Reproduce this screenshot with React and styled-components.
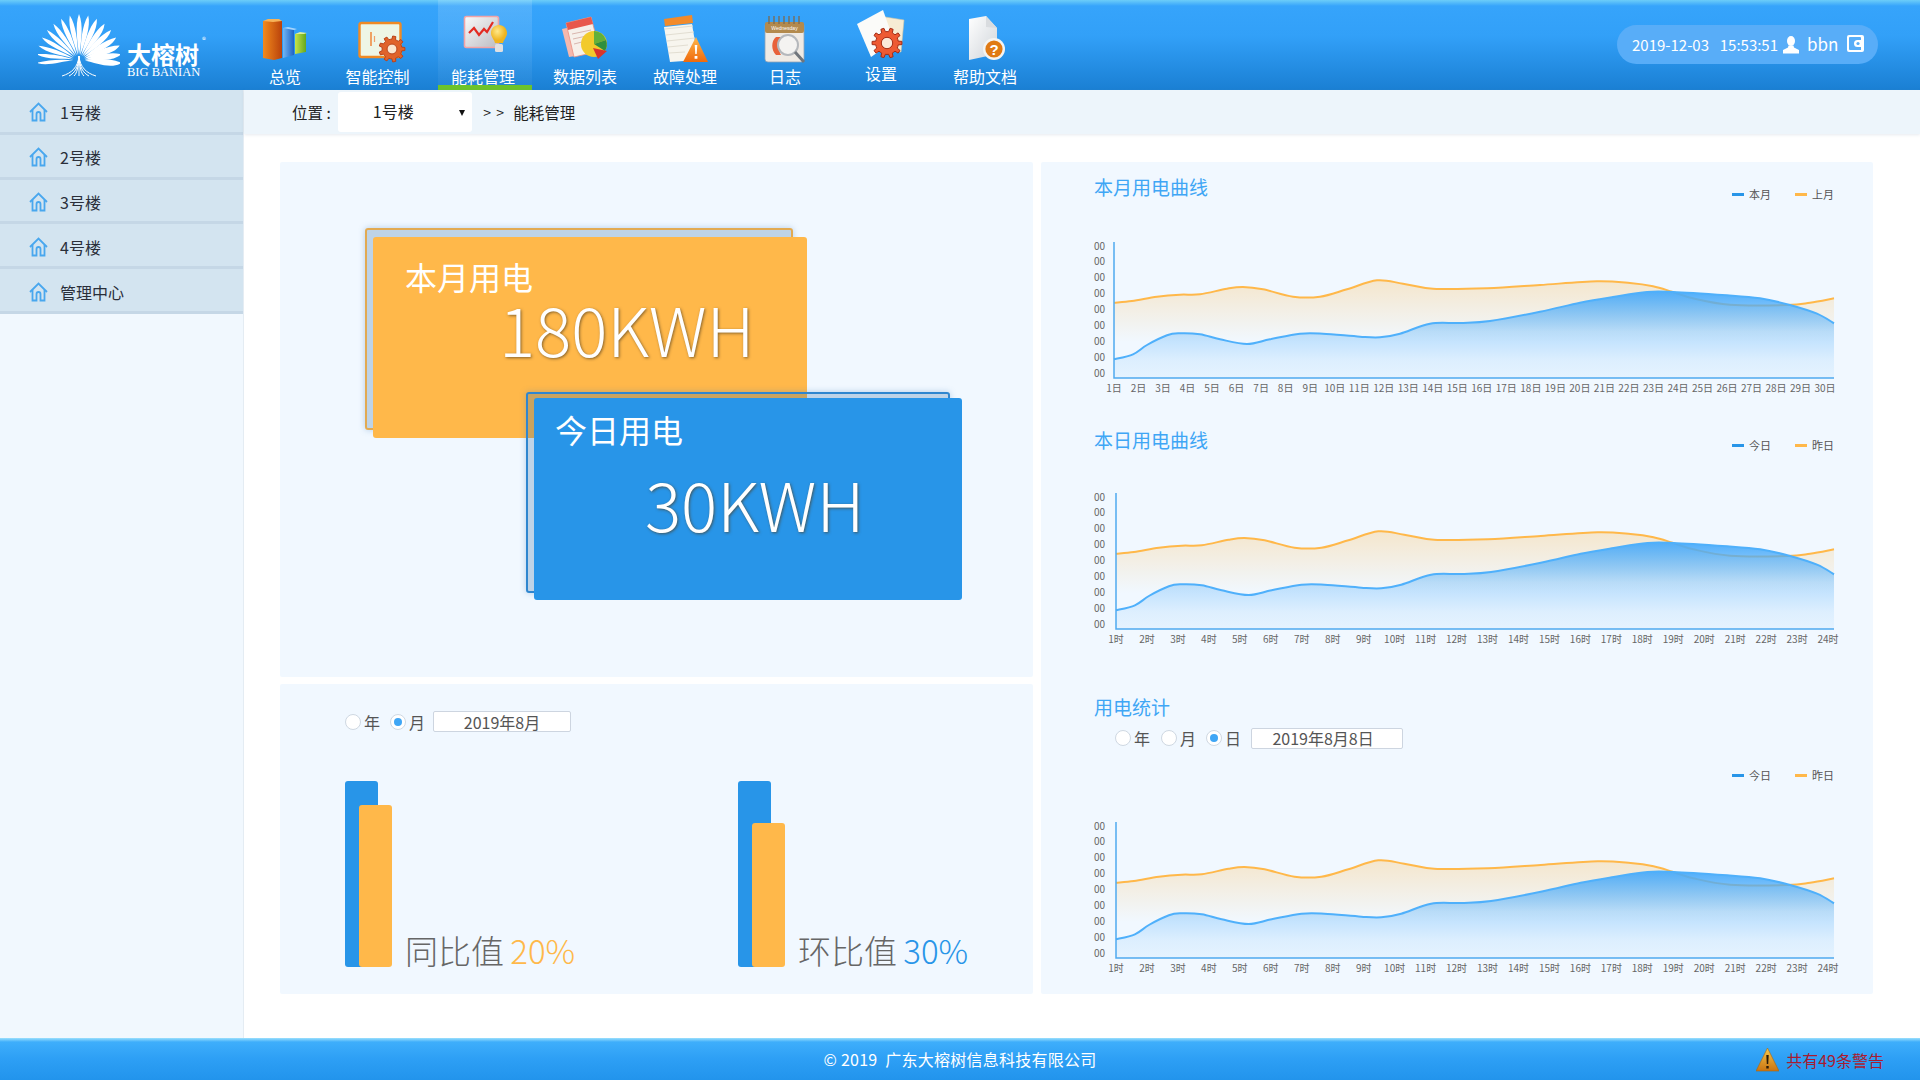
import styled, { createGlobalStyle } from 'styled-components'

const CJK = `"Noto Sans CJK SC", "Noto Sans", sans-serif`
const BLUE = '#2895e8'
const ORANGE = '#ffb84a'

const GlobalStyle = createGlobalStyle`
  html, body {
    margin: 0;
    padding: 0;
    background: #fff;
    font-family: ${CJK};
    overflow: hidden;
  }
  * { box-sizing: border-box; }
`

const Page = styled.div`
  width: 1920px;
  height: 1080px;
  display: flex;
  flex-direction: column;
`

/* header */
const Header = styled.header`
  height: 90px;
  flex: none;
  display: flex;
  background: linear-gradient(#6ccdf8 0, #36a4fb 6px, #32a0f8 40%, #1a7fd3 100%);
`
const LogoBox = styled.div`
  width: 253px;
  flex: none;
  display: flex;
  align-items: flex-start;
`
const LogoText = styled.div`
  margin: 41px 0 0 7px;
  color: #fff;
  width: 76px;
  position: relative;
`
const LogoName = styled.div`
  font-size: 24px;
  font-weight: 700;
  line-height: 26px;
  white-space: nowrap;
`
const LogoSub = styled.div`
  font-family: "Liberation Serif", serif;
  font-size: 12.5px;
  line-height: 10px;
  white-space: nowrap;
`
const LogoMark = styled.span`
  position: absolute;
  left: 75px;
  top: -6px;
  font-size: 8px;
  line-height: 10px;
`
const Nav = styled.nav`
  display: flex;
`
const NavItem = styled.div`
  width: ${p => p.$w}px;
  height: 90px;
  padding-top: 7px;
  padding-right: ${p => (p.$active ? '4px' : '0')};
  display: flex;
  flex-direction: column;
  align-items: center;
  color: #fff;
  border-bottom: ${p => (p.$active ? '5px solid #6cc32b' : 'none')};
  background: ${p => (p.$active ? 'linear-gradient(rgba(255,255,255,.14), rgba(255,255,255,.04))' : 'none')};
  svg { display: block; flex: none; }
`
const NavLabel = styled.span`
  font-size: 16px;
  line-height: 20px;
  margin-top: ${p => (p.$lift ? '-4px' : '-1px')};
  white-space: nowrap;
`
const UserPill = styled.div`
  margin: 25px 42px 0 auto;
  width: 261px;
  height: 39px;
  border-radius: 20px;
  background: #58adf8;
  color: #fff;
  display: flex;
  align-items: center;
  padding-left: 15px;
  font-size: 15px;
  white-space: pre;
`
const Clock = styled.span`
  word-spacing: 2px;
  margin-right: 5px;
`
const UserName = styled.span`
  font-size: 17px;
  line-height: 20px;
  margin: -2px 9px 0 8px;
`
const ExitWrap = styled.span`
  display: flex;
  margin-top: -3px;
`

/* body */
const Body = styled.div`
  flex: 1;
  display: flex;
  min-height: 0;
`
const Sidebar = styled.aside`
  width: 244px;
  flex: none;
  background: #f1f8fe;
  border-right: 1px solid #e4ecf3;
`
const SideItem = styled.div`
  height: 44.8px;
  display: flex;
  align-items: center;
  padding: 3px 0 0 29px;
  gap: 12px;
  background: #d3e4f0;
  border-bottom: 3px solid #c5d7e6;
  color: #2a2f3a;
  font-size: 16px;
`
const Main = styled.main`
  flex: 1;
  min-width: 0;
  display: flex;
  flex-direction: column;
`
const Crumbs = styled.div`
  height: 44px;
  flex: none;
  display: flex;
  align-items: center;
  background: #edf5fb;
  box-shadow: 0 1px 3px rgba(120, 140, 160, .18);
  color: #222;
  font-size: 15.5px;
  padding-left: 48px;
  white-space: pre;
`
const SelectBox = styled.div`
  width: 134px;
  height: 40px;
  margin: 0 11px 0 7.5px;
  background: #fff;
  border-radius: 3px;
  position: relative;
  display: flex;
  align-items: center;
  justify-content: center;
  padding: 0 24px 2px 0;
  font-size: 16px;
  &::after {
    content: '';
    position: absolute;
    right: 7px;
    top: 18px;
    border: 3.5px solid transparent;
    border-top: 6px solid #111;
    border-bottom: 0;
  }
`
const Arrows = styled.span`
  width: 30px;
  font-size: 14px;
  letter-spacing: 1px;
`
const Content = styled.div`
  flex: 1;
  display: grid;
  grid-template-columns: 753px 832px;
  grid-template-rows: 515px 310px;
  gap: 7px 8px;
  padding: 28px 0 0 36px;
`
const Panel = styled.section`
  background: #f1f8ff;
  border-radius: 2px;
  grid-row: ${p => p.$rows || 'auto'};
  grid-column: ${p => p.$col || 'auto'};
  padding: ${p => p.$pad || '0'};
  isolation: isolate;
`

/* usage cards */
const CardWrap = styled.div`
  position: relative;
  width: ${p => p.$w}px;
  height: ${p => p.$h}px;
  margin: ${p => p.$m};
`
const CardFrame = styled.div`
  position: absolute;
  left: -8px;
  top: ${p => p.$top}px;
  right: ${p => p.$right}px;
  bottom: ${p => p.$bottom}px;
  border: 2px solid ${p => p.$c};
  border-radius: 3px;
  background: rgba(40, 100, 160, .25);
  box-shadow: 0 0 6px rgba(70, 130, 190, .35);
`
const CardFace = styled.div`
  position: absolute;
  inset: 0;
  background: ${p => p.$c};
  border-radius: 3px;
  color: #fff;
`
const CardTitle = styled.div`
  position: absolute;
  left: ${p => p.$x}px;
  top: ${p => p.$y}px;
  font-size: 32px;
  line-height: 32px;
`
const CardValue = styled.div`
  position: absolute;
  left: ${p => p.$x}px;
  top: ${p => p.$y}px;
  font-size: 67.5px;
  font-weight: 300;
  line-height: 70px;
  white-space: nowrap;
  text-shadow: 1px 1px 3px rgba(80, 60, 30, .7);
`

/* radio row */
const FilterRow = styled.div`
  display: flex;
  align-items: center;
  height: ${p => p.$h}px;
  margin: ${p => p.$m || '0'};
  color: #555;
  font-size: 16px;
`
const RadioLabel = styled.span`
  display: flex;
  align-items: center;
  gap: 3px;
  margin-right: ${p => p.$gap}px;
`
const RadioDot = styled.span`
  width: 16px;
  height: 16px;
  border-radius: 50%;
  background: #fff;
  border: 1px solid #cfd8e2;
  display: flex;
  align-items: center;
  justify-content: center;
  &::after {
    content: '';
    width: 8px;
    height: 8px;
    border-radius: 50%;
    background: ${p => (p.$on ? '#3fa6f5' : 'transparent')};
  }
`
const DateInput = styled.div`
  width: ${p => p.$w}px;
  height: 21px;
  background: #fff;
  border: 1px solid #cdd5e0;
  border-radius: 2px;
  display: flex;
  align-items: center;
  justify-content: center;
  font-size: 16px;
  color: #555;
  padding-right: ${p => p.$shift || 0}px;
`

/* ratio bars */
const BarRow = styled.div`
  display: flex;
  margin-top: 49px;
`
const BarGroup = styled.div`
  width: ${p => p.$w}px;
  flex: none;
  height: 186px;
  display: flex;
  align-items: flex-end;
`
const Bar = styled.div`
  width: 33px;
  height: ${p => p.$h}px;
  background: ${p => p.$c};
  border-radius: 3px;
  margin-left: ${p => p.$ml || 0}px;
`
const BarText = styled.div`
  margin-left: 13px;
  font-size: 33px;
  line-height: 36px;
  word-spacing: -1px;
  color: #666;
  white-space: nowrap;
  font-weight: 300;
  margin-bottom: -1px;
`
const BarValue = styled.span`
  color: ${p => p.$c};
`

/* charts */
const ChartSection = styled.div`
  padding: ${p => p.$top}px 39px 0 53px;
`
const SectionHead = styled.div`
  display: flex;
  justify-content: space-between;
  align-items: flex-start;
`
const SectionTitle = styled.h3`
  margin: 0;
  font-weight: 400;
  font-size: 19px;
  line-height: 26px;
  color: #3fa6f5;
`
const Legend = styled.div`
  display: flex;
  gap: 24px;
  height: 14px;
  margin-top: ${p => p.$top || 0}px;
  justify-content: flex-end;
  font-size: 11px;
  line-height: 14px;
  color: #555;
`
const LegendItem = styled.span`
  display: flex;
  align-items: center;
  gap: 5px;
  &::before {
    content: '';
    width: 12px;
    height: 3px;
    background: ${p => p.$c};
  }
`
const ChartSvg = styled.svg`
  display: block;
  margin: ${p => p.$top}px 0 0 -10px;
  text { font-family: ${CJK}; fill: #666; }
`

/* footer */
const Footer = styled.footer`
  height: 42px;
  flex: none;
  position: relative;
  display: flex;
  align-items: center;
  justify-content: center;
  color: #fff;
  font-size: 16px;
  letter-spacing: .25px;
  white-space: pre;
  background: linear-gradient(#9be0fd 0, #3eaefb 4px, #2d9ff5 50%, #2294ec 100%);
`
const Warning = styled.div`
  position: absolute;
  right: 36px;
  top: 10px;
  display: flex;
  align-items: center;
  gap: 7px;
  color: #a81b30;
  letter-spacing: 0;
  line-height: 24px;
`

/* drawing helpers */
const gearPath = (cx, cy, r, teeth) => {
  const step = (Math.PI * 2) / teeth
  const inner = r * 0.76
  let d = ''
  for (let i = 0; i < teeth; i++) {
    const a = i * step
    const pts = [
      [inner, a - step * 0.5],
      [inner, a - step * 0.27],
      [r, a - step * 0.17],
      [r, a + step * 0.17],
      [inner, a + step * 0.27],
    ]
    pts.forEach(([rad, ang], k) => {
      d += `${i === 0 && k === 0 ? 'M' : 'L'}${(cx + rad * Math.cos(ang)).toFixed(1)} ${(cy + rad * Math.sin(ang)).toFixed(1)}`
    })
  }
  return d + 'Z'
}

function Gear({ cx, cy, r, teeth = 9, fill, stroke, hole = '#fff' }) {
  return (
    <g>
      <path d={gearPath(cx, cy, r, teeth)} fill={fill} stroke={stroke} strokeWidth="1" />
      <circle cx={cx} cy={cy} r={r * 0.38} fill={hole} stroke={stroke} strokeWidth="1" />
    </g>
  )
}

function TreeLogo() {
  const count = 17
  const feathers = Array.from({ length: count }, (_, i) => {
    const t = i / (count - 1)
    const ang = -86 + t * 172
    const len = 47 - Math.abs(t - 0.5) * 10
    const bend = (t - 0.5) * 12
    return (
      <path
        key={i}
        transform={`translate(41 47) rotate(${ang})`}
        d={`M0 -6 C${2.4 + bend * 0.2} -${len * 0.4} ${4.6 + bend} -${len * 0.78} ${bend * 0.8} -${len} C${-4.4 + bend * 0.6} -${len * 0.76} -1.4 -${len * 0.4} 0 -6Z`}
        fill="#fff"
      />
    )
  })
  return (
    <svg width="82" height="64" viewBox="0 0 82 64" style={{ marginLeft: 38, marginTop: 14 }}>
      {feathers}
      <path
        d="M41 42 C40 53 34 59 24 62 M41 42 C40.5 53 37 59 31 62 M41 42 V62 M41 42 C41.5 53 45 59 51 62 M41 42 C42 53 48 59 58 62 M41 42 C40.5 53 39 59 36 62 M41 42 C41.5 53 43 59 46 62"
        fill="none"
        stroke="#fff"
        strokeWidth="1"
      />
    </svg>
  )
}

function BarsIcon() {
  return (
    <svg width="60" height="60" viewBox="0 0 60 60">
      <defs>
        <linearGradient id="bA" x1="0" x2="1"><stop offset="0" stopColor="#f28a1c" /><stop offset="1" stopColor="#b9420c" /></linearGradient>
        <linearGradient id="bB" x1="0" x2="1"><stop offset="0" stopColor="#6fb6f5" /><stop offset="1" stopColor="#1f63c4" /></linearGradient>
        <linearGradient id="bC" x1="0" x2="1"><stop offset="0" stopColor="#c7e34a" /><stop offset="1" stopColor="#64a81d" /></linearGradient>
      </defs>
      <path d="M28 21l11 2v25l-11 3z" fill="url(#bB)" />
      <path d="M28 21l5-1 9 2-3 1z" fill="#a7d4fb" />
      <path d="M40 27l11-1v19l-11 2z" fill="url(#bC)" />
      <path d="M40 27l5-2 7 1-3 1z" fill="#ddef9c" />
      <path d="M8 14l12 0 7 0v37l-8 2-11-2z" fill="url(#bA)" />
      <path d="M8 14l5-2 11 0 3 2-9 1z" fill="#f6b35a" />
    </svg>
  )
}

function ControlIcon() {
  return (
    <svg width="60" height="60" viewBox="0 0 60 60">
      <rect x="11.5" y="16" width="41" height="34" rx="2" fill="#eef6e6" stroke="#f08a24" strokeWidth="2.4" />
      <path d="M23 25v14" stroke="#ef7f2b" strokeWidth="1.4" />
      <path d="M26.5 29v6" stroke="#ef9f6b" strokeWidth="1.2" />
      <Gear cx={44} cy={42} r={13} fill="#e0632a" stroke="#b9431a" hole="#fbe7cf" />
    </svg>
  )
}

function EnergyIcon() {
  return (
    <svg width="60" height="60" viewBox="0 0 60 60">
      <defs>
        <linearGradient id="eA" x1="0" y1="0" x2="1" y2="1"><stop offset="0" stopColor="#fafafa" /><stop offset="1" stopColor="#bcbcc2" /></linearGradient>
        <radialGradient id="eB" cx=".4" cy=".35"><stop offset="0" stopColor="#ffe98a" /><stop offset="1" stopColor="#f0b41e" /></radialGradient>
      </defs>
      <rect x="11.5" y="9.5" width="34" height="31" rx="2" fill="url(#eA)" stroke="#f2a3a6" strokeWidth="1.6" />
      <path d="M16 26l5-5 5 7 5-6 3 3 6-10" fill="none" stroke="#e32b22" strokeWidth="2.2" />
      <path d="M46 18c5 0 8 4 8 8 0 4-3 6-4 10h-8c-1-4-4-6-4-10 0-4 3-8 8-8z" fill="url(#eB)" />
      <rect x="42" y="37" width="8" height="8" rx="1.5" fill="#dfe0e2" />
    </svg>
  )
}

function DataIcon() {
  return (
    <svg width="60" height="60" viewBox="0 0 60 60">
      <path d="M7 22l27-6 6 30-26 4z" fill="#f4b8ad" />
      <path d="M11 16l25-6 9 34-26 6z" fill="#f6f0ea" stroke="#ea8f80" strokeWidth=".8" />
      <path d="M11 16l25-6 2 7-25 6z" fill="#e8584c" />
      <path d="M17 27l19-4M18 32l18-4M19 37l12-3" stroke="#d9b6ae" strokeWidth="1" />
      <circle cx="39" cy="37" r="13" fill="#f2ca2b" />
      <path d="M39 37V24a13 13 0 0 1 12 9z" fill="#62b03a" />
      <path d="M39 37l12-4a13 13 0 0 1 -1 11z" fill="#2e8f3f" />
      <path d="M38 41l14 3-9 8z" fill="#d8352b" />
    </svg>
  )
}

function FaultIcon() {
  return (
    <svg width="60" height="60" viewBox="0 0 60 60">
      <defs>
        <linearGradient id="fA" x1="0" y1="0" x2="0" y2="1"><stop offset="0" stopColor="#ffb64a" /><stop offset="1" stopColor="#ef6a0d" /></linearGradient>
      </defs>
      <path d="M9 20l28-3 6 36-28 2z" fill="#f7f5ee" />
      <path d="M9 20l28-4 1 8-28 3z" fill="#f28a2a" transform="translate(0 -8)" />
      <path d="M10 22l28-3M11 28l28-3M12 34l28-3M13 40l20-2M14 46l16-1" stroke="#e2ded2" strokeWidth="1" />
      <path d="M41 30l12 25H28z" fill="url(#fA)" />
      <path d="M39.7 38h2.6l-.6 9h-1.4zM39.6 49h2.8v2.8h-2.8z" fill="#fff" />
    </svg>
  )
}

function LogIcon() {
  const rings = [14, 19, 24, 29, 34, 39, 44]
  return (
    <svg width="60" height="60" viewBox="0 0 60 60">
      <rect x="10" y="16" width="39" height="39" rx="3" fill="#efeae4" stroke="#8fa2b5" strokeWidth=".8" />
      <rect x="10" y="15" width="39" height="11" rx="2" fill="#b38a4d" />
      <text x="29.5" y="23" textAnchor="middle" fontSize="5" fill="#fff" fontFamily="Liberation Sans, sans-serif">Wednesday</text>
      {rings.map(x => <path key={x} d={`M${x} 9v8`} stroke="#7c6a50" strokeWidth="1.3" />)}
      <path d="M21 30c-5 4-5 13 0 18h5c-3-5-3-13 0-18z" fill="#e8613a" />
      <circle cx="33" cy="38" r="10" fill="#f5f5f5" fillOpacity=".75" stroke="#b5b8bc" strokeWidth="2" />
      <path d="M40 45l9 10" stroke="#70757b" strokeWidth="3" />
    </svg>
  )
}

function SettingIcon() {
  return (
    <svg width="60" height="60" viewBox="0 0 60 60">
      <path d="M28 9l25 4-3 32-24-2z" fill="#f6ecd4" stroke="#cfc4a4" strokeWidth=".6" />
      <path d="M6 17L32 3l11 31-23 16z" fill="#fbfbf9" />
      <Gear cx={36} cy={36} r={15} teeth={10} fill="#ee5a33" stroke="#a32a14" hole="#fbe9da" />
    </svg>
  )
}

function HelpIcon() {
  return (
    <svg width="60" height="60" viewBox="0 0 60 60">
      <defs>
        <linearGradient id="hA" x1="0" y1="0" x2="1" y2="1"><stop offset="0" stopColor="#ffffff" /><stop offset="1" stopColor="#cfd4d9" /></linearGradient>
      </defs>
      <path d="M14 12l17-3 11 12v26l-28 6z" fill="url(#hA)" />
      <path d="M31 9l11 12-11-1z" fill="#d9dcdf" />
      <circle cx="39" cy="42" r="11" fill="#f4f4f2" />
      <circle cx="39" cy="42" r="8.6" fill="#e07a14" />
      <text x="39" y="47.5" textAnchor="middle" fontSize="15" fontWeight="700" fill="#fff" fontFamily="Liberation Sans, sans-serif">?</text>
    </svg>
  )
}

function HomeIcon() {
  return (
    <svg width="19" height="20" viewBox="0 0 19 20" fill="none" stroke="#49a7ee" strokeWidth="1.8">
      <path d="M1 10L9.5 1.5 18 10" />
      <path d="M3.5 8v10.5h4V12a2 2 0 0 1 4 0v6.5h4V8" />
    </svg>
  )
}

function UserIcon() {
  return (
    <svg width="16" height="18" viewBox="0 0 16 18" fill="#fff">
      <ellipse cx="8" cy="5" rx="4" ry="5" />
      <path d="M5.5 9.5h5l.5 2 5 2.5v3.5H0V14l5-2.5z" />
    </svg>
  )
}

function ExitIcon() {
  return (
    <svg width="17" height="17" viewBox="0 0 17 17">
      <path fillRule="evenodd" fill="#fff" d="M2 0h13a2 2 0 0 1 2 2v13a2 2 0 0 1-2 2H2a2 2 0 0 1-2-2V2a2 2 0 0 1 2-2zM2 3v11a1 1 0 0 0 1 1h11v-3h-3.5a3.5 3.5 0 0 1 0-7H14V3a1 1 0 0 0-1-1H3a1 1 0 0 0-1 1z" />
      <circle cx="11" cy="8.5" r="1.6" fill="#58adf8" />
    </svg>
  )
}

function WarningIcon() {
  return (
    <svg width="23" height="24" viewBox="0 0 23 24">
      <defs>
        <linearGradient id="wA" x1="0" y1="0" x2="0" y2="1"><stop offset="0" stopColor="#f8c84a" /><stop offset="1" stopColor="#c97412" /></linearGradient>
      </defs>
      <path d="M11.5 0L23 23H0z" fill="url(#wA)" stroke="#a8640e" strokeWidth=".6" />
      <path d="M10.3 7h2.4l-.5 9h-1.4zM10.3 18h2.4v2.6h-2.4z" fill="#2a1a08" />
    </svg>
  )
}

/* curve data, in px from the top left of the plot, traced for a plot 720 wide and 136 high */
const orangeCurve = [
  [0, 60.7], [18, 59], [43, 54.7], [66, 52.7], [86, 52.3], [113, 46.7], [129, 45], [149, 47.3],
  [179, 54.7], [206, 54.7], [233, 47.3], [263, 38.3], [289, 41.7], [319, 46.7], [373, 46.3],
  [426, 43], [483, 39.3], [516, 41], [539, 44.3], [558, 49.7], [579, 56.3], [616, 62.7],
  [673, 63], [696, 60.7], [720, 56.3],
]
const blueCurve = [
  [0, 117.3], [19, 112.3], [33, 103], [53, 93.3], [66, 91.3], [86, 92.3], [106, 97.3], [133, 102],
  [156, 97.3], [186, 91.7], [209, 91.7], [246, 94.7], [266, 95.3], [286, 91.7], [316, 81.7],
  [346, 81], [376, 79], [426, 69.7], [466, 60.7], [499, 55], [533, 50], [559, 50], [613, 53.3],
  [646, 56.3], [676, 63], [703, 71.7], [720, 81.3],
]

const smoothLine = pts => {
  let d = `M${pts[0][0]} ${pts[0][1]}`
  for (let i = 0; i < pts.length - 1; i++) {
    const p0 = pts[i - 1] || pts[i]
    const p1 = pts[i]
    const p2 = pts[i + 1]
    const p3 = pts[i + 2] || p2
    const c1x = p1[0] + (p2[0] - p0[0]) / 6
    const c1y = p1[1] + (p2[1] - p0[1]) / 6
    const c2x = p2[0] - (p3[0] - p1[0]) / 6
    const c2y = p2[1] - (p3[1] - p1[1]) / 6
    d += `C${c1x.toFixed(1)} ${c1y.toFixed(1)} ${c2x.toFixed(1)} ${c2y.toFixed(1)} ${p2[0].toFixed(1)} ${p2[1].toFixed(1)}`
  }
  return d
}

function AreaChart({ id, axisX, labels, step, marginTop }) {
  const top = 6
  const plotH = 136
  const plotW = 750 - axisX
  const sx = plotW / 720
  const place = pts => pts.map(([x, y]) => [axisX + x * sx, top + y])
  const orange = smoothLine(place(orangeCurve))
  const blue = smoothLine(place(blueCurve))
  const bottom = top + plotH
  const close = ` L750 ${bottom} L${axisX} ${bottom} Z`
  return (
    <ChartSvg width="780" height="165" viewBox="0 0 780 165" $top={marginTop}>
      <defs>
        <linearGradient id={`${id}o`} gradientUnits="userSpaceOnUse" x1="0" y1={top + 38} x2="0" y2={top + 100}>
          <stop offset="0" stopColor={ORANGE} stopOpacity=".28" />
          <stop offset="1" stopColor={ORANGE} stopOpacity="0" />
        </linearGradient>
        <linearGradient id={`${id}b`} gradientUnits="userSpaceOnUse" x1="0" y1={top + 50} x2="0" y2={bottom}>
          <stop offset="0" stopColor="#4aabfa" stopOpacity=".95" />
          <stop offset=".46" stopColor="#4aabfa" stopOpacity=".34" />
          <stop offset=".8" stopColor="#4aabfa" stopOpacity=".12" />
          <stop offset="1" stopColor="#4aabfa" stopOpacity=".07" />
        </linearGradient>
      </defs>
      {Array.from({ length: 9 }, (_, i) => (
        <text key={i} x="10" y={top + 7.5 + i * 15.95} fontSize="10">00</text>
      ))}
      <path d={orange + close} fill={`url(#${id}o)`} />
      <path d={orange} fill="none" stroke={ORANGE} strokeWidth="2" />
      <path d={blue + close} fill={`url(#${id}b)`} />
      <path d={blue} fill="none" stroke="#4fb0fb" strokeWidth="2" />
      <path d={`M${axisX} ${top} V${bottom} H750`} fill="none" stroke="#4fa9f0" strokeWidth="1.5" />
      {labels.map((label, i) => (
        <text key={label} x={axisX + i * step} y={bottom + 14} fontSize="10" textAnchor="middle">{label}</text>
      ))}
    </ChartSvg>
  )
}

const days = Array.from({ length: 30 }, (_, i) => `${i + 1}日`)
const hours = Array.from({ length: 24 }, (_, i) => `${i + 1}时`)
const floors = ['1号楼', '2号楼', '3号楼', '4号楼', '管理中心']
const navItems = [
  { label: '总览', w: 64, Icon: BarsIcon },
  { label: '智能控制', w: 121, Icon: ControlIcon },
  { label: '能耗管理', w: 94, Icon: EnergyIcon, active: true },
  { label: '数据列表', w: 106, Icon: DataIcon },
  { label: '故障处理', w: 94, Icon: FaultIcon },
  { label: '日志', w: 106, Icon: LogIcon },
  { label: '设置', w: 86, Icon: SettingIcon, lift: true },
  { label: '帮助文档', w: 122, Icon: HelpIcon },
]

export default function App() {
  return (
    <Page>
      <GlobalStyle />
      <Header>
        <LogoBox>
          <TreeLogo />
          <LogoText>
            <LogoName>大榕树</LogoName>
            <LogoSub>BIG BANIAN</LogoSub>
            <LogoMark>®</LogoMark>
          </LogoText>
        </LogoBox>
        <Nav>
          {navItems.map(({ label, w, Icon, active, lift }) => (
            <NavItem key={label} $w={w} $active={active}>
              <Icon />
              <NavLabel $lift={lift}>{label}</NavLabel>
            </NavItem>
          ))}
        </Nav>
        <UserPill>
          <Clock>2019-12-03  15:53:51</Clock>
          <UserIcon />
          <UserName>bbn</UserName>
          <ExitWrap><ExitIcon /></ExitWrap>
        </UserPill>
      </Header>
      <Body>
        <Sidebar>
          {floors.map(name => (
            <SideItem key={name}>
              <HomeIcon />
              {name}
            </SideItem>
          ))}
        </Sidebar>
        <Main>
          <Crumbs>
            位置 :
            <SelectBox>1号楼</SelectBox>
            <Arrows>&gt; &gt;</Arrows>
            能耗管理
          </Crumbs>
          <Content>
            <Panel>
              <CardWrap $w={434} $h={201} $m="75px 0 0 93px">
                <CardFrame $top={-9} $right={14} $bottom={8} $c="#e2aa52" />
                <CardFace $c={ORANGE}>
                  <CardTitle $x={32} $y={23}>本月用电</CardTitle>
                  <CardValue $x={126} $y={56}>180KWH</CardValue>
                </CardFace>
              </CardWrap>
              <CardWrap $w={428} $h={202} $m="-40px 0 0 254px">
                <CardFrame $top={-6} $right={12} $bottom={7} $c="#2f86cf" />
                <CardFace $c={BLUE}>
                  <CardTitle $x={21} $y={15}>今日用电</CardTitle>
                  <CardValue $x={111} $y={70}>30KWH</CardValue>
                </CardFace>
              </CardWrap>
            </Panel>
            <Panel $rows="1 / span 2" $col="2">
              <ChartSection $top={12}>
                <SectionHead>
                  <SectionTitle>本月用电曲线</SectionTitle>
                  <Legend $top={13}>
                    <LegendItem $c={BLUE}>本月</LegendItem>
                    <LegendItem $c={ORANGE}>上月</LegendItem>
                  </Legend>
                </SectionHead>
                <AreaChart id="month" axisX={30} labels={days} step={24.52} marginTop={35} />
              </ChartSection>
              <ChartSection $top={26}>
                <SectionHead>
                  <SectionTitle>本日用电曲线</SectionTitle>
                  <Legend $top={11}>
                    <LegendItem $c={BLUE}>今日</LegendItem>
                    <LegendItem $c={ORANGE}>昨日</LegendItem>
                  </Legend>
                </SectionHead>
                <AreaChart id="today" axisX={32} labels={hours} step={30.96} marginTop={34} />
              </ChartSection>
              <ChartSection $top={42}>
                <SectionTitle>用电统计</SectionTitle>
                <FilterRow $h={20} $m="8px 0 0 21px">
                  <RadioLabel $gap={11}><RadioDot />年</RadioLabel>
                  <RadioLabel $gap={10}><RadioDot />月</RadioLabel>
                  <RadioLabel $gap={10}><RadioDot $on />日</RadioLabel>
                  <DateInput $w={152} $shift={8}>2019年8月8日</DateInput>
                </FilterRow>
                <Legend $top={20}>
                  <LegendItem $c={BLUE}>今日</LegendItem>
                  <LegendItem $c={ORANGE}>昨日</LegendItem>
                </Legend>
                <AreaChart id="stat" axisX={32} labels={hours} step={30.96} marginTop={34} />
              </ChartSection>
            </Panel>
            <Panel $pad="27px 0 0 65px">
              <FilterRow $h={21}>
                <RadioLabel $gap={10}><RadioDot />年</RadioLabel>
                <RadioLabel $gap={8}><RadioDot $on />月</RadioLabel>
                <DateInput $w={138}>2019年8月</DateInput>
              </FilterRow>
              <BarRow>
                <BarGroup $w={393}>
                  <Bar $h={186} $c={BLUE} />
                  <Bar $h={162} $c={ORANGE} $ml={-19} />
                  <BarText>同比值 <BarValue $c={ORANGE}>20%</BarValue></BarText>
                </BarGroup>
                <BarGroup $w={300}>
                  <Bar $h={186} $c={BLUE} />
                  <Bar $h={144} $c={ORANGE} $ml={-19} />
                  <BarText>环比值 <BarValue $c={BLUE}>30%</BarValue></BarText>
                </BarGroup>
              </BarRow>
            </Panel>
          </Content>
        </Main>
      </Body>
      <Footer>
        © 2019  广东大榕树信息科技有限公司
        <Warning>
          <WarningIcon />
          共有49条警告
        </Warning>
      </Footer>
    </Page>
  )
}
